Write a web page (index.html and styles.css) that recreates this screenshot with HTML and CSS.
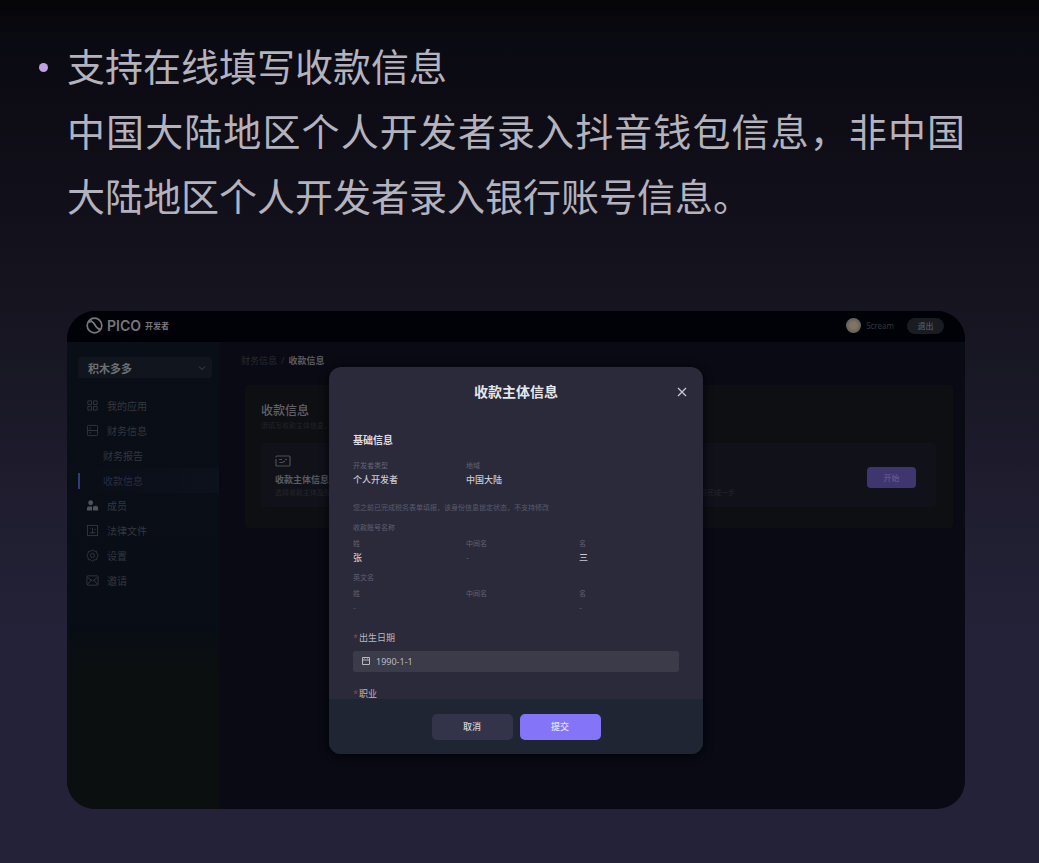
FILE: index.html
```html
<!DOCTYPE html>
<html lang="zh-CN">
<head>
<meta charset="utf-8">
<meta name="viewport" content="width=device-width, initial-scale=1">
<title>支持在线填写收款信息</title>
<link rel="stylesheet" href="styles.css">
</head>
<body>
<main class="slide">
  <ul class="points">
    <li class="point">支持在线填写收款信息<br>中国大陆地区个人开发者录入抖音钱包信息，非中国大陆地区个人开发者录入银行账号信息。</li>
  </ul>

  <section class="app">
    <header class="topbar">
      <div class="brand">
        <svg class="brand-mark" viewBox="0 0 16 16" fill="none" stroke="currentColor" stroke-width="1.6"><circle cx="8" cy="8" r="6.900"/><path d="M2.500 5C5 3.200 7 4.500 8.200 7s2.300 4.600 5.300 4.200"/><path d="M4.500 3l8 9.500" stroke-width="1"/></svg>
        <span class="brand-name">PICO</span>
        <span class="brand-sub">开发者</span>
      </div>
      <div class="account">
        <span class="avatar"></span>
        <span class="user">Scream</span>
        <button class="logout" type="button">退出</button>
      </div>
    </header>

    <div class="columns">
      <aside class="sidebar">
        <button class="team" type="button">积木多多
          <svg class="chevron" viewBox="0 0 8 8" fill="none" stroke="currentColor"><path d="M1 2.500l3 3 3-3"/></svg>
        </button>
        <nav class="menu">
          <a class="item" href="#"><svg class="icon" viewBox="0 0 14 14" fill="none" stroke="currentColor"><path d="M2 2h4v4H2zM8 2h4v4H8zM2 8h4v4H2zM8 8h4v4H8z"/></svg>我的应用</a>
          <a class="item" href="#"><svg class="icon" viewBox="0 0 14 14" fill="none" stroke="currentColor"><rect x="1.500" y="1.500" width="11" height="11" rx="1"/><path d="M1.500 7h11M3.500 4.500h2M3.500 9.500h2"/></svg>财务信息</a>
          <a class="item child" href="#">财务报告</a>
          <a class="item child current" href="#">收款信息</a>
          <a class="item" href="#"><svg class="icon solid" viewBox="0 0 14 14" fill="currentColor"><circle cx="5" cy="4" r="2.600"/><path d="M1 12.500V10c0-1.500 1-2 2-2h3.500v4.500zM7.500 8H9v-.8h2.500V8H13v4.500H7.500z"/></svg>成员</a>
          <a class="item" href="#"><svg class="icon" viewBox="0 0 14 14" fill="none" stroke="currentColor"><rect x="1.500" y="1.500" width="11" height="11"/><path d="M4 5h1M7 4v6M4 9.500h6M9 6h1.500"/></svg>法律文件</a>
          <a class="item" href="#"><svg class="icon" viewBox="0 0 14 14" fill="none" stroke="currentColor"><path d="M7 1l2 1.300 2.400.2.400 2.400L13 7l-1.200 2.100-.4 2.400-2.400.2L7 13l-2-1.300-2.400-.2-.4-2.400L1 7l1.200-2.100.4-2.400L5 2.300z"/><circle cx="7" cy="7" r="2.200"/></svg>设置</a>
          <a class="item" href="#"><svg class="icon" viewBox="0 0 14 14" fill="none" stroke="currentColor"><rect x="1" y="2" width="12" height="10" rx="1"/><path d="M1.500 3.500L7 7.500l5.500-4M1.500 11.500l4-5M12.500 11.500l-4-5"/></svg>邀请</a>
        </nav>
      </aside>

      <div class="content">
        <div class="crumbs"><span>财务信息</span><span>/</span><b>收款信息</b></div>
        <section class="panel">
          <h2 class="panel-title">收款信息</h2>
          <p class="panel-hint">请填写收款主体信息，该信息将用于收款</p>
          <div class="card">
            <div class="card-text">
              <svg class="card-icon" viewBox="0 0 16 12" fill="none" stroke="currentColor" stroke-width="1.200"><path d="M2 1h12q1 0 1 1v8q0 1-1 1H2q-1 0-1-1V4M1 2.500Q1 1 2 1M4 4.500h3M10 4.500h2M4.500 7.500h3L10 6"/></svg>
              <h3 class="card-title">收款主体信息</h3>
              <p class="card-hint"><span>选择收款主体及账号</span><span>前完成一步</span></p>
            </div>
            <button class="start" type="button">开始</button>
          </div>
        </section>
      </div>
    </div>

    <div class="overlay">
      <form class="dialog" role="dialog" aria-labelledby="dialog-title">
        <header class="dialog-head">
          <h2 class="dialog-title" id="dialog-title">收款主体信息</h2>
          <button class="close" type="button" aria-label="关闭"><svg viewBox="0 0 10 10" fill="none" stroke="currentColor" stroke-width="1.300"><path d="M1 1l8 8M9 1L1 9"/></svg></button>
        </header>
        <div class="dialog-body">
          <h3 class="group">基础信息</h3>
          <dl class="facts">
            <div><dt>开发者类型</dt><dd>个人开发者</dd></div>
            <div><dt>地域</dt><dd>中国大陆</dd></div>
          </dl>
          <p class="note">您之前已完成税务表单填报，该身份信息锁定状态，不支持修改</p>
          <p class="subhead">收款账号名称</p>
          <dl class="facts names">
            <div><dt>姓</dt><dd>张</dd></div>
            <div><dt>中间名</dt><dd class="faint">-</dd></div>
            <div><dt>名</dt><dd>三</dd></div>
          </dl>
          <p class="subhead">英文名</p>
          <dl class="facts names">
            <div><dt>姓</dt><dd class="faint">-</dd></div>
            <div><dt>中间名</dt><dd></dd></div>
            <div><dt>名</dt><dd class="faint">-</dd></div>
          </dl>
          <label class="label" for="birth">出生日期</label>
          <div class="field">
            <svg class="calendar" viewBox="0 0 10 10" fill="none" stroke="currentColor"><path d="M1.500 1.500h7v7h-7zM1.500 4h7M3.500 1v1.500M6.500 1v1.500"/></svg>
            <input class="date" id="birth" type="text" value="1990-1-1">
          </div>
          <span class="label">职业</span>
        </div>
        <footer class="dialog-foot">
          <button class="action" type="button">取消</button>
          <button class="action primary" type="submit">提交</button>
        </footer>
      </form>
    </div>
  </section>
</main>
</body>
</html>
```
FILE: styles.css
```css
* { box-sizing: border-box; }
body, h2, h3, p, dl, dd, ul { margin: 0; padding: 0; }
body {
  min-height: 100vh;
  background: linear-gradient(#050508 0, #0a0a12 40px, #0d0c15 100px, #15141f 300px, #1e1c2d 480px, #242238 640px, #242238 100%);
  color: #b4b2bf;
  font-family: "Noto Sans", "Noto Sans CJK SC", sans-serif;
}
button, input { font-family: inherit; border: 0; padding: 0; }
a { text-decoration: none; }
svg { display: block; flex: none; }

.slide { padding: 32px 74px 54px 67px; }
.points { list-style: none; }
.point {
  position: relative;
  color: #b4b2bc;
  font-family: "Noto Sans CJK SC", sans-serif;
  font-size: 38px;
  line-height: 65px;
  text-align: justify;
}
.point::before {
  content: "";
  position: absolute;
  left: -28px;
  top: 31px;
  width: 9px;
  height: 9px;
  border-radius: 50%;
  background: #c0a0e0;
}

.app {
  position: relative;
  display: flex;
  flex-direction: column;
  min-height: 498px;
  margin-top: 84px;
  border-radius: 28px;
  overflow: hidden;
  background: #090a13;
}
.topbar {
  display: flex;
  align-items: center;
  justify-content: space-between;
  height: 31px;
  padding: 0 21px 2px 19px;
  background: #010208;
}
.brand { display: flex; align-items: center; gap: 4px; color: #77777b; }
.brand-mark { width: 17px; height: 17px; }
.brand-name { font-family: Inter, sans-serif; font-size: 14px; font-weight: 600; }
.brand-sub { font-size: 8px; font-weight: 700; }
.account { display: flex; align-items: center; gap: 5px; color: #34353a; }
.avatar { width: 15px; height: 15px; border-radius: 50%; background: radial-gradient(circle, #82745f 0 30%, #66655f 60%); }
.user { font-size: 8px; }
.logout { width: 37px; height: 16px; margin-left: 8px; border-radius: 8px; background: #1b1c22; color: #66676b; font-size: 8px; }

.columns { flex: 1; display: flex; }
.sidebar {
  flex: 0 0 152px;
  padding: 15px 0 0 11px;
  background: linear-gradient(#090e17 0, #080d16 280px, #0c0f10 330px);
}
.team {
  display: flex;
  align-items: center;
  justify-content: space-between;
  width: 134px;
  height: 21px;
  padding: 0 6px 0 10px;
  border-radius: 3px;
  background: #10151e;
  color: #6c6f75;
  font-size: 11px;
  font-weight: 700;
}
.chevron { width: 8px; height: 8px; color: #44474e; }
.menu { display: flex; flex-direction: column; margin-top: 15px; }
.item {
  display: flex;
  align-items: center;
  gap: 8px;
  height: 25px;
  padding-left: 8px;
  color: #34373e;
  font-size: 10px;
}
.icon { width: 13px; height: 13px; }
.solid { color: #50535a; }
.child { padding-left: 25px; }
.current {
  background: linear-gradient(#343c78, #343c78) left / 2px 16px no-repeat, linear-gradient(90deg, transparent, #0c111c);
  color: #292d46;
}

.content { flex: 1; min-width: 0; padding: 12px 12px 0 26px; }
.crumbs { display: flex; gap: 4px; margin-left: -4px; color: #292a30; font-size: 9px; line-height: 14px; }
.crumbs b { color: #5b5c62; }
.panel { min-height: 143px; margin-top: 17px; padding: 17px 17px 20px 16px; border-radius: 4px; background: #0e0f13; }
.panel-title { color: #606167; font-size: 12px; font-weight: 500; line-height: 18px; }
.panel-hint { color: #222328; font-size: 7px; line-height: 12px; }
.card {
  display: flex;
  align-items: center;
  justify-content: space-between;
  margin-top: 11px;
  padding: 12px 20px 8px 14px;
  border-radius: 4px;
  background: #11111a;
}
.card-icon { width: 16px; height: 12px; color: #4d4e55; }
.card-text { flex: none; width: 460px; }
.card-title { margin-top: 6px; color: #5b5c63; font-size: 9px; line-height: 14px; }
.card-hint { display: flex; justify-content: space-between; color: #25262b; font-size: 7px; line-height: 12px; }
.start { width: 49px; height: 21px; border-radius: 4px; background: #40366f; color: #69609a; font-size: 8px; }

.overlay { position: absolute; inset: 0; display: flex; align-items: center; justify-content: center; }
.dialog {
  display: flex;
  flex-direction: column;
  width: 374px;
  height: 387px;
  border-radius: 12px;
  overflow: hidden;
  background: #2a2a3b;
  box-shadow: 0 2px 10px #02030a;
}
.dialog-head {
  display: grid;
  grid-template-columns: 1fr auto 1fr;
  align-items: center;
  padding: 15px 16px 0;
}
.dialog-title { grid-column: 2; color: #e6e6ea; font-size: 14px; font-weight: 700; line-height: 20px; }
.close { justify-self: end; width: 10px; height: 10px; background: none; color: #c9c9d2; }
.dialog-body { flex: 1; min-height: 0; overflow: hidden; padding: 30px 24px 0; }
.group { color: #dcdce2; font-size: 10px; font-weight: 700; line-height: 16px; }
.facts { display: grid; grid-template-columns: repeat(3, 113px); margin-top: 10px; }
dt { color: #626272; font-size: 7px; line-height: 15px; }
dd { height: 15px; color: #c8c8d0; font-size: 9px; font-weight: 500; line-height: 14px; }
.faint { color: #4c4c5b; }
.note { margin-top: 12px; color: #5a5a6a; font-size: 7px; line-height: 16px; }
.subhead { margin-top: 4px; color: #606070; font-size: 7px; line-height: 16px; }
.names { margin: 0; }
.label { display: block; margin-top: 15px; color: #b9b9c3; font-size: 9px; line-height: 14px; }
.label::before { content: "*"; color: #95404b; margin-right: 1px; }
.field {
  display: flex;
  align-items: center;
  gap: 5px;
  height: 21px;
  margin-top: 6px;
  padding: 0 8px;
  border-radius: 3px;
  background: #3b3b49;
  color: #b9b9c3;
}
.calendar { width: 10px; height: 10px; }
.date { flex: 1; min-width: 0; background: none; color: inherit; font-size: 9px; }
.dialog-foot {
  display: flex;
  justify-content: center;
  gap: 7px;
  padding: 15px 0 14px;
  background: #202533;
}
.action { width: 81px; height: 26px; border-radius: 5px; background: #33344a; color: #d2d2da; font-size: 9px; font-weight: 500; }
.primary { background: #8474f8; color: #e4e0ff; }
```
